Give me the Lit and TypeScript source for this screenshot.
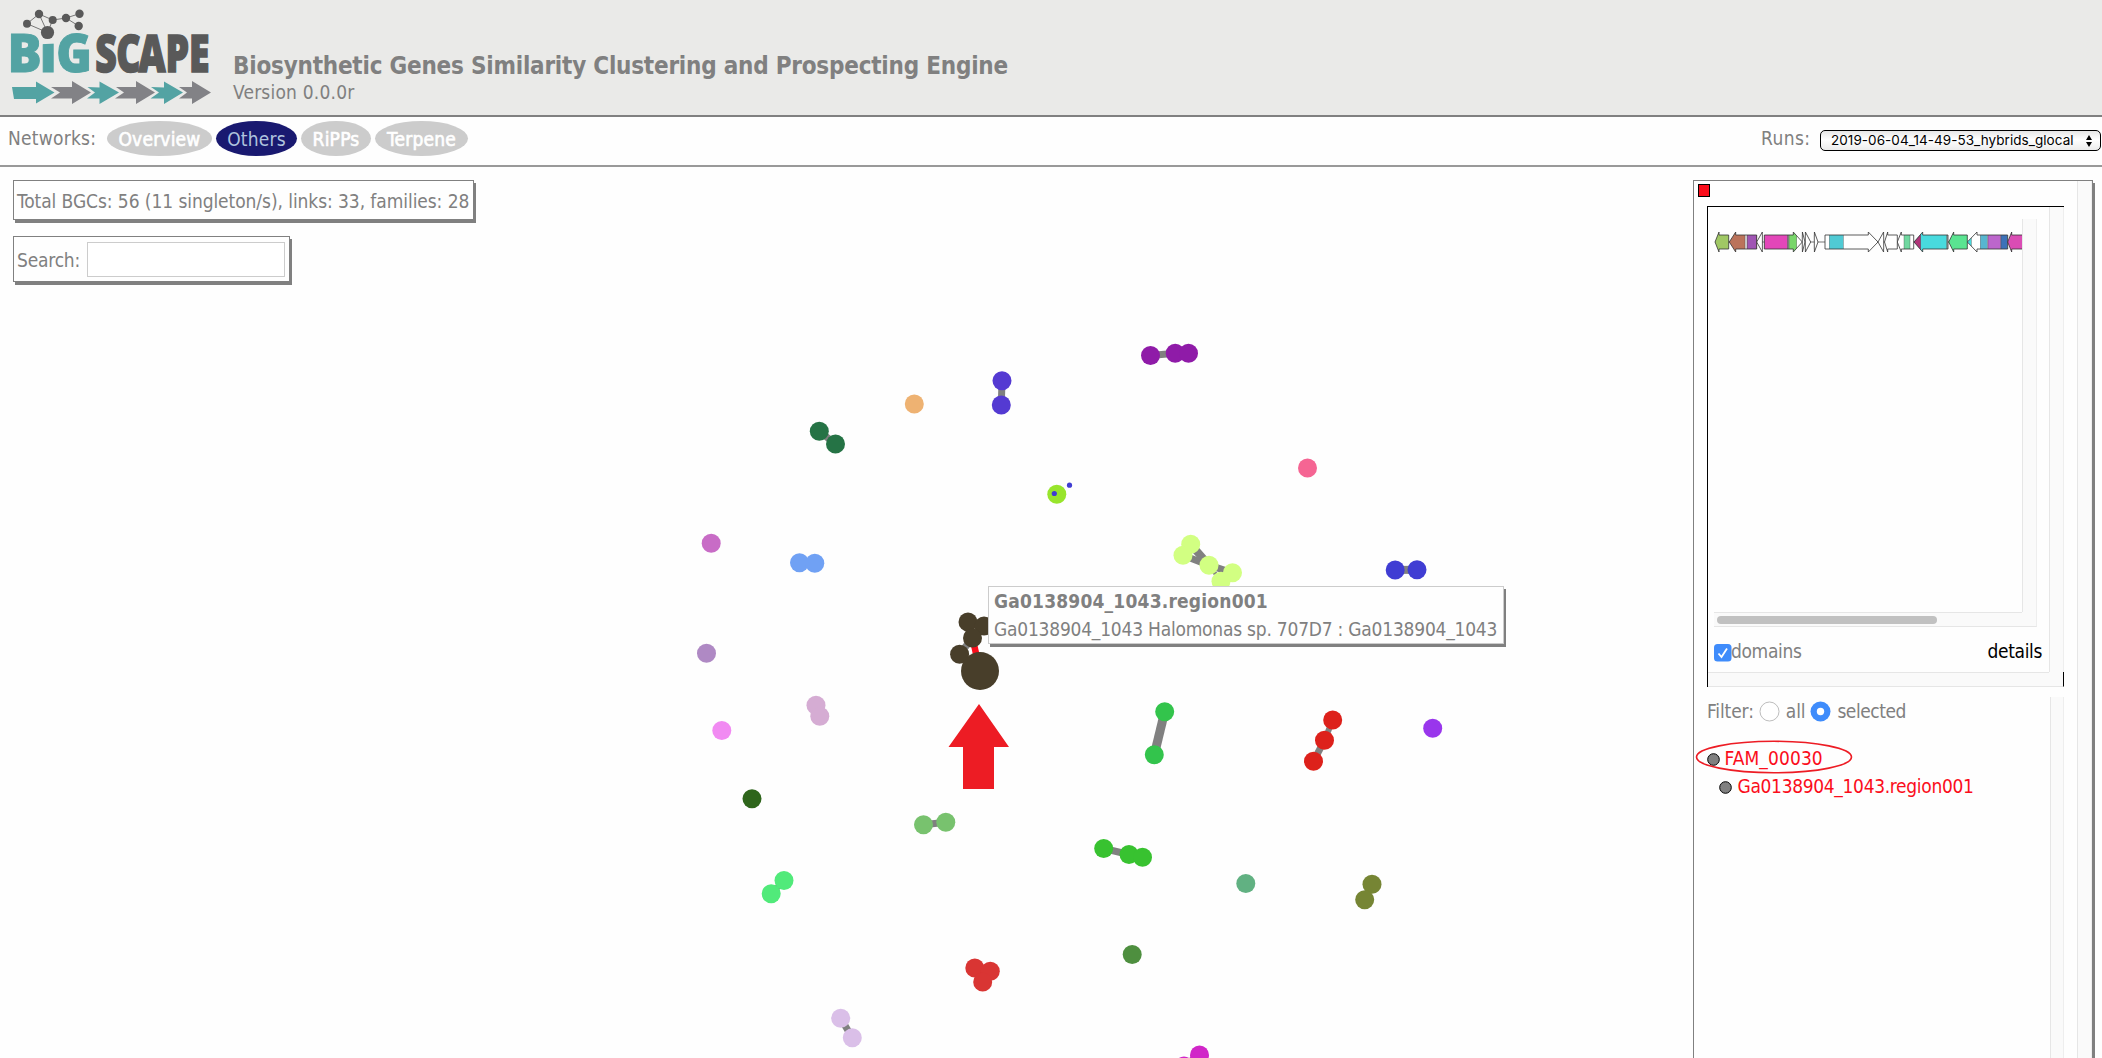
import { LitElement, html, svg, css } from "lit";
import { customElement } from "lit/decorators.js";

type Pt = [number, number];
interface Family { color: string; nodes: Pt[]; links?: [number, number, number][]; }

const FAMILIES: Family[] = [
  { color: "#8f1ba8", nodes: [[1150.5, 355.5], [1175.2, 353.3], [1188.5, 353.3]], links: [[0, 1, 7]] },
  { color: "#543ad2", nodes: [[1002, 380.7], [1001.3, 405]], links: [[0, 1, 7]] },
  { color: "#eeb272", nodes: [[914.3, 404]] },
  { color: "#257345", nodes: [[819.3, 431.3], [835.5, 444]], links: [[0, 1, 7]] },
  { color: "#98e52c", nodes: [[1056.8, 494.3]] },
  { color: "#f56593", nodes: [[1307.5, 468]] },
  { color: "#c86cc6", nodes: [[711.2, 543.3]] },
  { color: "#70a1f4", nodes: [[799.5, 562.8], [814.8, 563.2]] },
  { color: "#d2ff82", nodes: [[1190.7, 544.3], [1183, 555.3], [1209, 565.2], [1232.5, 572.8], [1221, 581.3]], links: [[0, 2, 8], [1, 2, 7], [2, 3, 7], [2, 4, 4]] },
  { color: "#403dd3", nodes: [[1395.2, 570], [1417, 569.7]], links: [[0, 1, 8]] },
  { color: "#af89c4", nodes: [[706.5, 653.3]] },
  { color: "#f18af2", nodes: [[721.8, 730.5]] },
  { color: "#d5acd3", nodes: [[816, 705.3], [819.8, 716.3]] },
  { color: "#2e651b", nodes: [[752, 798.8]] },
  { color: "#78c26e", nodes: [[923.5, 824.8], [945.8, 822.2]], links: [[0, 1, 7]] },
  { color: "#51ea7a", nodes: [[784, 880.5], [771.2, 893.8]], links: [[0, 1, 6]] },
  { color: "#d93533", nodes: [[974.8, 968], [990.3, 971.2], [982.7, 982]] },
  { color: "#dabfe8", nodes: [[840.7, 1018.3], [852.3, 1037.7]], links: [[0, 1, 7]] },
  { color: "#33c44c", nodes: [[1164.7, 711.8], [1154.3, 754.7]], links: [[0, 1, 9]] },
  { color: "#dd211b", nodes: [[1332.7, 720], [1324.5, 740.3], [1313.5, 761.2]], links: [[0, 1, 6], [1, 2, 7]] },
  { color: "#9936ec", nodes: [[1432.7, 728.3]] },
  { color: "#38c230", nodes: [[1103.7, 848.5], [1129, 854.5], [1142.5, 857.2]], links: [[0, 1, 7]] },
  { color: "#61b182", nodes: [[1245.8, 883.5]] },
  { color: "#768534", nodes: [[1372, 884.2], [1364.7, 899.8]] },
  { color: "#4e8f3f", nodes: [[1132.2, 954.5]] },
  { color: "#d127c8", nodes: [[1199.5, 1055], [1184, 1066]], links: [[0, 1, 7]] },
];

interface Gene { tip: number; neck: number; end: number; parts?: [number, number, string][]; fill?: string; }

const GENES: Gene[] = [
  { tip: 1715, neck: 1719, end: 1728.7, fill: "#a0c864" },
  { tip: 1729.3, neck: 1735.7, end: 1756.7, fill: "#bb735b", parts: [[1745, 1747.2, "#dddddd"], [1747.2, 1756.7, "#a055b4"]] },
  { tip: 1756.7, neck: 1762.3, end: 1762.4 },
  { tip: 1802.3, neck: 1793.3, end: 1764.3, parts: [[1764.3, 1787.7, "#e346b9"], [1787.7, 1789, "#999999"], [1789, 1796.7, "#78d66a"]] },
  { tip: 1805, neck: 1802.4, end: 1802.3 },
  { tip: 1810.7, neck: 1805.4, end: 1805.3 },
  { tip: 1818, neck: 1814.4, end: 1814.3 },
  { tip: 1878, neck: 1868.3, end: 1825, parts: [[1829.3, 1843.3, "#50cad4"]] },
  { tip: 1878, neck: 1883.6, end: 1883.7 },
  { tip: 1884.5, neck: 1887.7, end: 1897.3 },
  { tip: 1897.3, neck: 1901.3, end: 1913.7, parts: [[1904, 1910, "#70d8a0"]] },
  { tip: 1914, neck: 1922.7, end: 1948, fill: "#48dade", parts: [[1914, 1920.7, "#b03478"], [1946.7, 1948, "#bbbbbb"]] },
  { tip: 1948.7, neck: 1953.7, end: 1967.3, fill: "#5ae491" },
  { tip: 1967.3, neck: 1977, end: 2007.7, parts: [[1967.3, 1971.3, "#48dade"], [1980.3, 1987.3, "#57b6d0"], [1988, 2000.7, "#bc66cc"], [2001, 2007.7, "#3c72b8"]] },
  { tip: 2007.7, neck: 2011.7, end: 2040, fill: "#da4cb4" },
];

const genePath = (g: Gene) =>
  `M${g.tip} 242L${g.neck} 232V235H${g.end}V249H${g.neck}V252Z`;

@customElement("bgc-logo")
class BgcLogo extends LitElement {
  static styles = css`
    :host { display: block; width: 233px; height: 115px; }
    svg { display: block; }
    .word { font-family: "Open Sans", "Noto Sans", sans-serif; font-weight: 800; font-stretch: normal; }
  `;
  render() {
    const nodes: [number, number, number][] = [[27, 23.7, 4], [39, 14, 4.2], [52.7, 20, 4], [66, 18, 4.2], [79.5, 13.7, 4.2], [78.7, 26, 4.2]];
    return html`<svg width="232" height="115" viewBox="0 0 232 115">
      <clipPath id="stem"><path d="M40 44.500L57 43V76H40Z"/></clipPath>
      <g class="word" fill="#53a3a3" stroke="#53a3a3" text-anchor="middle" stroke-width="1">
        <text transform="translate(24.500 72) scale(.95 1)" font-size="53.500">B</text>
        <g clip-path="url(#stem)"><text transform="translate(48.300 72)" font-size="52">i</text></g>
        <text transform="translate(74 72) scale(.9 1)" font-size="53.500">G</text>
      </g>
      <text class="word" transform="translate(0 72) scale(.74 1)" x="143.200 173.600 205.400 239.500 269.300" y="0" text-anchor="middle" font-size="50.500" fill="#595959" stroke="#595959" stroke-width="1.600">SCAPE</text>
      <path d="M27 23.700L39 14L52.700 20L66 18L79.500 13.700M66 18L78.700 26M27 23.700L47.500 32.500L39 14M47.500 32.500L52.700 20" fill="none" stroke="#777" stroke-width="1"/>
      ${nodes.map(([x, y, r]) => svg`<circle cx=${x} cy=${y} r=${r} fill="#595959"/>`)}
      <circle cx="47.500" cy="32.500" r="6.600" fill="#595959"/>
      <g fill="#53a3a3">
        <path d="M12 87H36V81.500L54.500 92.500L36 103.500V99H14Z"/>
        <path d="M87.500 87L99.500 87.500V81.500L119 92.500L99.500 104V98.500H87L95 92.500Z"/>
        <path d="M151 87L164 87.500V81.500L183 92.500L164 104V98.500H150.500L159 92.500Z"/>
      </g>
      <g fill="#828286">
        <path d="M51 87H72V81L91 92.500L72 104V98.500H51L60 92.500Z"/>
        <path d="M116 87H136V81L155 92.500L136 104V98.500H115L124 92.500Z"/>
        <path d="M179 87H192V81L211 92.500L192 104V98.500H179L187 92.500Z"/>
      </g>
    </svg>`;
  }
}

@customElement("similarity-network")
class SimilarityNetwork extends LitElement {
  static styles = css`
    :host { display: block; }
    svg { display: block; width: 100%; height: 100%; }
  `;
  render() {
    return html`<svg viewBox="0 167 2102 891">
      ${FAMILIES.map(f => svg`
        ${(f.links ?? []).map(([a, b, w]) => svg`<line x1=${f.nodes[a][0]} y1=${f.nodes[a][1]} x2=${f.nodes[b][0]} y2=${f.nodes[b][1]} stroke="#808080" stroke-width=${w}/>`)}
        ${f.nodes.map(([x, y]) => svg`<circle cx=${x} cy=${y} r="9.5" fill=${f.color}/>`)}`)}
      <circle cx="1054.300" cy="493.500" r="2.600" fill="#403dd3"/>
      <circle cx="1069.500" cy="485.200" r="2.600" fill="#403dd3"/>
      <line x1="959.500" y1="654.300" x2="972.500" y2="638" stroke="#808080" stroke-width="7"/>
      <line x1="972.500" y1="638" x2="980" y2="671" stroke="#fb0d1b" stroke-width="6.500"/>
      <g fill="#483e2a">
        <circle cx="968" cy="622" r="9.500"/><circle cx="984" cy="626" r="9.500"/>
        <circle cx="972.500" cy="638" r="9.500"/><circle cx="959.600" cy="654.300" r="9.500"/>
        <circle cx="980" cy="671" r="19"/>
      </g>
      <path d="M979 704L1009 747H994V789H963V747H948.500Z" fill="#ed1c24"/>
    </svg>`;
  }
}

@customElement("app-root")
class AppRoot extends LitElement {
  static styles = css`
    :host { display: block; width: 2102px; height: 1058px; overflow: hidden; background: #fefefe; color: #808080;
      font: 19px/24px "DejaVu Sans Condensed", "DejaVu Sans", sans-serif; font-stretch: condensed; white-space: nowrap; }
    * { box-sizing: border-box; }
    .header { height: 117px; display: flex; background: #eaeae8; border-bottom: 2px solid #808080; }
    .heading { padding-top: 51px; }
    .title { font-size: 24px; font-weight: bold; line-height: 30px; letter-spacing: -.22px; }
    .version { letter-spacing: .2px; margin-top: -1px; }
    .nav { height: 50px; display: flex; border-bottom: 2px solid #999; padding: 4px 1px 0 8px; align-items: flex-start; }
    .navlabel { line-height: 34px; width: 99px; letter-spacing: .25px; }
    .pill { height: 35px; border-radius: 50%; background: #ccc; color: #fff; line-height: 36px; text-align: center; margin-right: 4px; letter-spacing: .2px; -webkit-text-stroke: .6px #fff; }
    .pill.on { background: #191970; color: #b0c4de; -webkit-text-stroke: 0; }
    .p1 { width: 105px; } .p2 { width: 81px; } .p3 { width: 70px; } .p4 { width: 93px; }
    .runs { margin-left: auto; display: flex; }
    .runlabel { line-height: 34px; width: 59px; letter-spacing: .4px; }
    .select { margin-top: 9px; width: 281px; height: 21px; border: 1px solid #000; border-radius: 5px; background: linear-gradient(#e6e6e6, #fff 45%, #ececec);
      color: #000; font: 13.5px/19px Inter, sans-serif; letter-spacing: .05px; padding: 0 7px 0 10px; display: flex; justify-content: space-between; align-items: center; }
    .main { position: relative; height: 891px; display: flex; justify-content: space-between; padding: 13px 9px 0 13px; }
    .net { position: absolute; inset: 0; }
    .left { position: relative; display: flex; flex-direction: column; align-items: flex-start; gap: 16px; }
    .box { background: #fefefe; border: 1px solid #808080; box-shadow: 2px 3px 0 #808080; }
    .total { width: 461px; height: 40px; padding: 1px 0 0 3px; line-height: 38px; letter-spacing: -.07px; }
    .search { width: 277px; height: 46px; padding: 1px 4px 0 3px; display: flex; justify-content: space-between; align-items: center; letter-spacing: -.2px; }
    .search span { padding-top: 1px; }
    .field { width: 198px; height: 35px; border: 1px solid #ccc; background: #fff; }
    .tip { position: absolute; left: 988px; top: 419px; width: 516px; height: 58px; background: #fefefe; border: 1px solid #ccc; box-shadow: 2px 3px 0 #808080; padding: 0 0 0 5px; line-height: 28px; letter-spacing: -.22px; }
    .tip b { display: block; letter-spacing: .2px; }
    .panel { position: relative; width: 400px; height: 900px; display: flex; }
    .content { flex: 1; padding: 3px 12px 0 4px; }
    .track { width: 15px; background: #fafafa; border-left: 1px solid #e6e6e6; border-right: 1px solid #eee; }
    .close { width: 12px; height: 13px; border: 1px solid #000; background: #fb0d1b; }
    .detail { margin: 9px 0 0 9px; width: 357px; height: 481px; border-left: 1px solid #000; border-top: 1px solid #000; display: grid; grid-template: 465px 15px / 341px 15px; }
    .corner { background: #fafafa; border-right: 1px solid #000; border-bottom: 1px solid #e6e6e6; }
    .hbar { background: #fafafa; border-top: 1px solid #e6e6e6; border-bottom: 1px solid #e6e6e6; }
    .inner { padding: 12px 7px 0 6px; }
    .scroller { width: 323px; height: 408px; display: grid; grid-template: 393px 15px / 308px 15px; }
    .genes { overflow: hidden; }
    .genes svg { display: block; }
    .thumbbar { background: #fafafa; border-top: 1px solid #e6e6e6; border-bottom: 1px solid #e6e6e6; padding: 3px; }
    .thumb { width: 220px; height: 8px; border-radius: 4px; background: #c1c1c1; }
    .scorner { background: #fafafa; border-bottom: 1px solid #e6e6e6; border-right: 1px solid #eee; }
    .opts { margin-top: 14px; display: flex; align-items: center; height: 24px; width: 328px; letter-spacing: -.35px; }
    .opts span { margin-top: -4px; }
    .check { margin-right: -1px; }
    .details { color: #000; margin-left: auto; }
    .lower { margin-left: 9px; display: flex; justify-content: space-between; width: 357px; height: 400px; margin-top: 10px; }
    .lower .track { width: 14px; }
    .filter { display: flex; align-items: center; height: 24px; margin-top: 2px; letter-spacing: -.12px; }
    .radio { margin: 0 6px 0 5px; }
    .picked { letter-spacing: -.45px; }
    .list { margin-top: 22px; color: #fb0d1b; }
    .item { display: flex; align-items: center; height: 28px; gap: 5px; position: relative; letter-spacing: .1px; }
    .item span { margin: -2px 0 0 -.5px; }
    .item.sub { padding-left: 12px; gap: 6px; letter-spacing: -.33px; }
    .mark { position: absolute; left: -12px; top: -5px; }
  `;
  render() {
    return html`
      <div class="header">
        <bgc-logo></bgc-logo>
        <div class="heading">
          <div class="title">Biosynthetic Genes Similarity Clustering and Prospecting Engine</div>
          <div class="version">Version 0.0.0r</div>
        </div>
      </div>
      <div class="nav">
        <div class="navlabel">Networks:</div>
        <div class="pill p1">Overview</div><div class="pill p2 on">Others</div><div class="pill p3">RiPPs</div><div class="pill p4">Terpene</div>
        <div class="runs"><div class="runlabel">Runs:</div>
          <div class="select"><span>2019-06-04_14-49-53_hybrids_glocal</span>
            <svg width="8" height="14" viewBox="0 0 8 14"><path d="M4 1L7 6H1ZM4 13L7 8H1Z"/></svg></div>
        </div>
      </div>
      <div class="main">
        <similarity-network class="net"></similarity-network>
        <div class="left">
          <div class="box total">Total BGCs: 56 (11 singleton/s), links: 33, families: 28</div>
          <div class="box search"><span>Search:</span><div class="field"></div></div>
        </div>
        <div class="box panel">
          <div class="content">
            <div class="close"></div>
            <div class="detail">
              <div class="inner">
                <div class="scroller">
                  <div class="genes"><svg width="308" height="60" viewBox="1714 219 308 60">
                    <path d="M1715 242H2030" stroke="#777"/>
                    ${GENES.map((g, i) => svg`
                      <clipPath id="g${i}"><path d=${genePath(g)}/></clipPath>
                      <path d=${genePath(g)} fill=${g.fill ?? "#fff"}/>
                      <g clip-path="url(#g${i})">${(g.parts ?? []).map(([a, b, c]) => svg`<rect x=${a} y="230" width=${b - a} height="24" fill=${c} stroke="#444" stroke-opacity=".6" stroke-width=".6"/>`)}</g>
                      <path d=${genePath(g)} fill="none" stroke="#333" stroke-width=".8"/>`)}
                  </svg></div>
                  <div class="track"></div>
                  <div class="thumbbar"><div class="thumb"></div></div>
                  <div class="scorner"></div>
                </div>
                <div class="opts">
                  <svg class="check" width="18" height="18" viewBox="0 0 18 18"><rect width="17.500" height="17.500" rx="3.500" fill="#3f8cfb"/><path d="M4.500 9.500L7.500 13L13 4.500" fill="none" stroke="#fff" stroke-width="1.800"/></svg>
                  <span>domains</span><span class="details">details</span>
                </div>
              </div>
              <div class="track"></div><div class="hbar"></div><div class="corner"></div>
            </div>
            <div class="lower">
              <div>
                <div class="filter"><span>Filter:</span>
                  <svg class="radio" width="21" height="21"><circle cx="10.500" cy="10.500" r="9.500" fill="#fff" stroke="#bdbdbd"/></svg><span>all</span>
                  <svg class="radio" width="21" height="21"><circle cx="10.500" cy="10.500" r="10" fill="#3f8cfb"/><circle cx="10.500" cy="10.500" r="3.700" fill="#fff"/></svg><span class="picked">selected</span>
                </div>
                <div class="list">
                  <div class="item"><svg width="13" height="13"><circle cx="6.500" cy="6.500" r="5.800" fill="#808080" stroke="#000"/></svg><span>FAM_00030</span>
                    <svg class="mark" width="158" height="34"><ellipse cx="79" cy="17" rx="77.500" ry="15.700" fill="none" stroke="#ed1c24" stroke-width="1.600"/></svg></div>
                  <div class="item sub"><svg width="13" height="13"><circle cx="6.500" cy="6.500" r="5.800" fill="#808080" stroke="#000"/></svg><span>Ga0138904_1043.region001</span></div>
                </div>
              </div>
              <div class="track"></div>
            </div>
          </div>
          <div class="track"></div>
        </div>
        <div class="tip"><b>Ga0138904_1043.region001</b><span>Ga0138904_1043 Halomonas sp. 707D7 : Ga0138904_1043</span></div>
      </div>`;
  }
}
